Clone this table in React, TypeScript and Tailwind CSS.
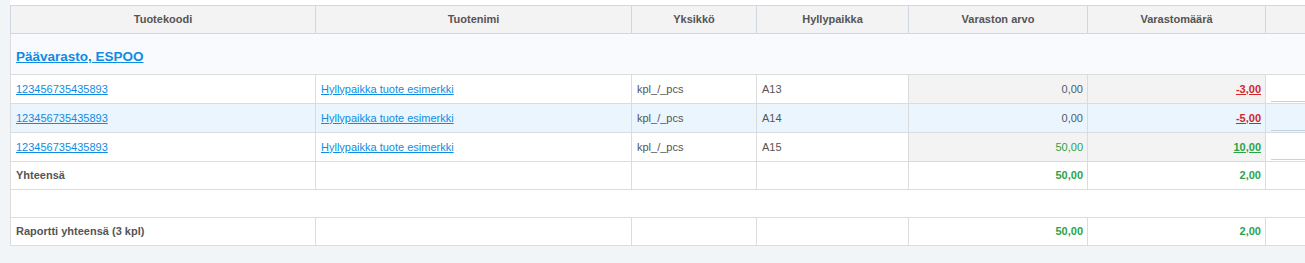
import React from 'react';

interface Row {
  code: string;
  name: string;
  unit: string;
  shelf: string;
  value: string;
  qty: string;
  tone: 'neg' | 'pos';
}

const rows: Row[] = [
  { code: '123456735435893', name: 'Hyllypaikka tuote esimerkki', unit: 'kpl_/_pcs', shelf: 'A13', value: '0,00', qty: '-3,00', tone: 'neg' },
  { code: '123456735435893', name: 'Hyllypaikka tuote esimerkki', unit: 'kpl_/_pcs', shelf: 'A14', value: '0,00', qty: '-5,00', tone: 'neg' },
  { code: '123456735435893', name: 'Hyllypaikka tuote esimerkki', unit: 'kpl_/_pcs', shelf: 'A15', value: '50,00', qty: '10,00', tone: 'pos' },
];

const headers = ['Tuotekoodi', 'Tuotenimi', 'Yksikkö', 'Hyllypaikka', 'Varaston arvo', 'Varastomäärä', ''];

const link = 'text-[#0e8ce4] underline';
const cell = 'border border-[#dcdcdc] px-[5px] align-middle';

const App: React.FC = () => {
  return (
    <div className="w-[1305px] h-[263px] overflow-hidden bg-[#f2f5f8] pl-[10px] font-['Liberation_Sans',Arial,sans-serif] text-[11px] text-[#555]">
      <div className="w-[1400px] h-[5px] bg-white" />
      <table className="w-[1400px] table-fixed border-collapse bg-white">
        <colgroup>
          <col className="w-[305px]" />
          <col className="w-[316px]" />
          <col className="w-[125px]" />
          <col className="w-[152px]" />
          <col className="w-[179px]" />
          <col className="w-[178px]" />
          <col />
        </colgroup>
        <thead>
          <tr className="h-[28px] bg-[#f3f3f3]">
            {headers.map((h, i) => (
              <th key={i} className="border border-[#cfd8e1] px-[5px] text-center font-bold text-[#555]">
                {h}
              </th>
            ))}
          </tr>
        </thead>
        <tbody>
          <tr className="h-[41px] bg-[#f8fafd]">
            <td colSpan={7} className="border border-[#dcdcdc] px-[5px] pt-[7px]">
              <a className="text-[13.5px] font-bold text-[#0e8ce4] underline">Päävarasto, ESPOO</a>
            </td>
          </tr>
          {rows.map((r, i) => {
            const hl = i === 1;
            const gray = hl ? '' : 'bg-[#f3f3f3]';
            return (
              <tr key={i} className={`h-[29px] ${hl ? 'bg-[#ebf5fd]' : 'bg-white'}`}>
                <td className={cell}><a className={link}>{r.code}</a></td>
                <td className={cell}><a className={link}>{r.name}</a></td>
                <td className={cell}>{r.unit}</td>
                <td className={cell}>{r.shelf}</td>
                <td className={`${cell} ${gray} pr-[4px] text-right ${r.tone === 'pos' ? 'text-[#2aa44a]' : 'text-[#4f5b70]'}`}>{r.value}</td>
                <td className={`${cell} ${gray} pr-[4px] text-right`}>
                  <a className={`font-bold underline ${r.tone === 'neg' ? 'text-[#d0262f]' : 'text-[#2aa44a]'}`}>{r.qty}</a>
                </td>
                <td className={`${cell} pt-[8px]`}>
                  <div className="h-[17px] border-b border-[#bfd3e6]" />
                </td>
              </tr>
            );
          })}
          <tr className="h-[28px] bg-white">
            <td className={`${cell} font-bold`}>Yhteensä</td>
            <td className={cell} />
            <td className={cell} />
            <td className={cell} />
            <td className={`${cell} pr-[4px] text-right font-bold text-[#2aa44a]`}>50,00</td>
            <td className={`${cell} pr-[4px] text-right font-bold text-[#2aa44a]`}>2,00</td>
            <td className={cell} />
          </tr>
          <tr className="h-[28px] bg-white">
            <td colSpan={7} className={cell} />
          </tr>
          <tr className="h-[28px] bg-white">
            <td className={`${cell} font-bold`}>Raportti yhteensä (3 kpl)</td>
            <td className={cell} />
            <td className={cell} />
            <td className={cell} />
            <td className={`${cell} pr-[4px] text-right font-bold text-[#2aa44a]`}>50,00</td>
            <td className={`${cell} pr-[4px] text-right font-bold text-[#2aa44a]`}>2,00</td>
            <td className={cell} />
          </tr>
        </tbody>
      </table>
    </div>
  );
};

export default App;
